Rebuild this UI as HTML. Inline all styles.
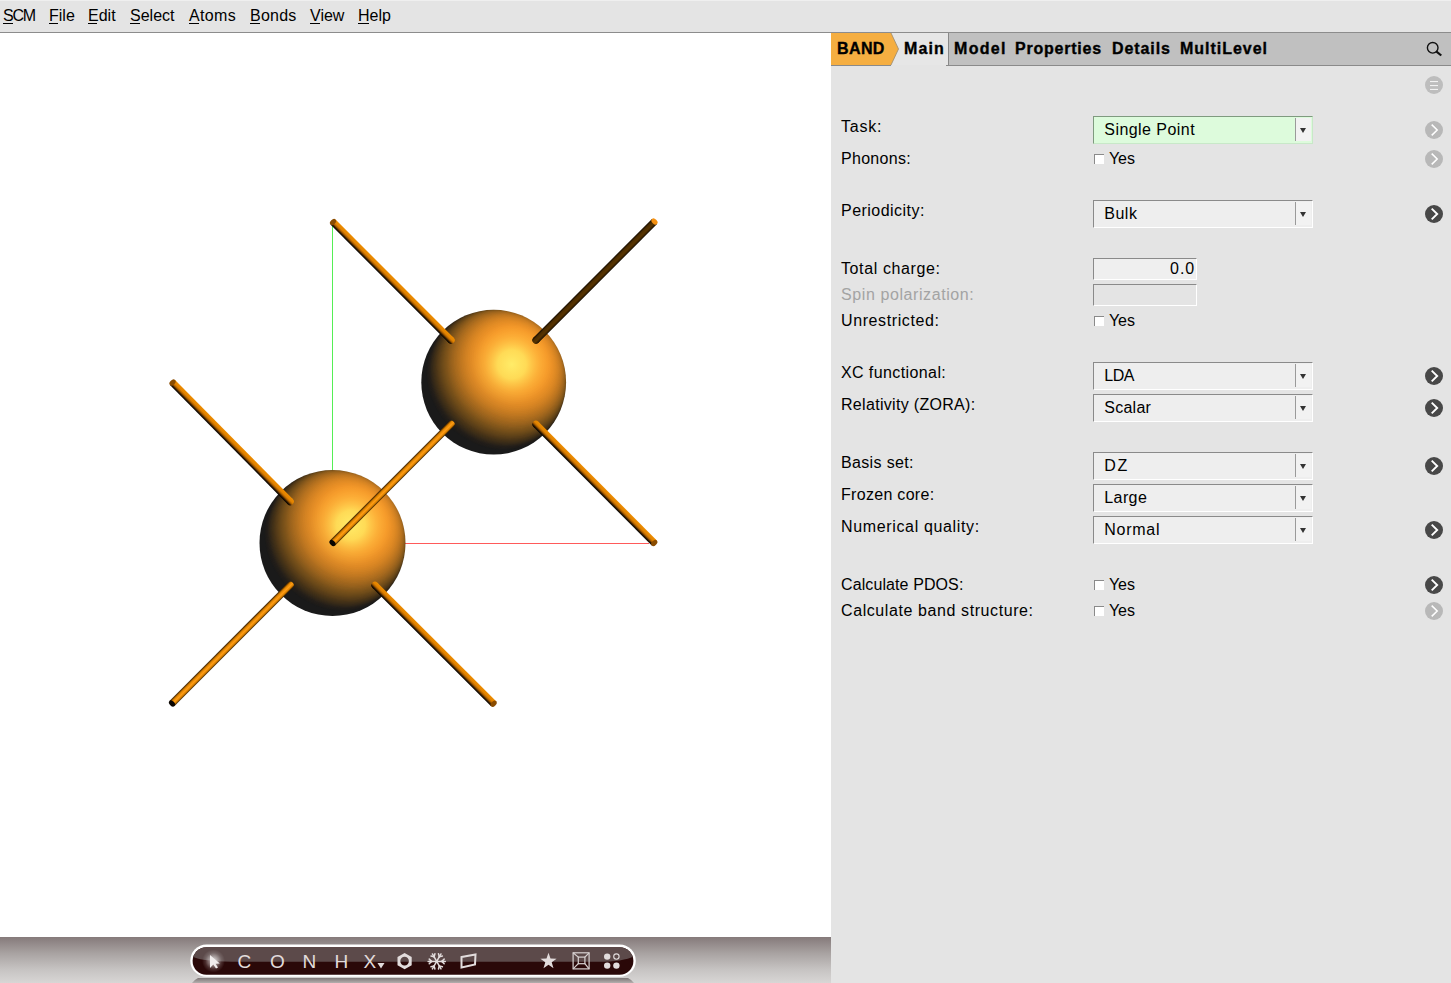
<!DOCTYPE html>
<html><head><meta charset="utf-8">
<style>
html,body{margin:0;padding:0;width:1451px;height:983px;overflow:hidden;background:#fff;}
body{position:relative;font-family:"Liberation Sans",sans-serif;font-size:16px;color:#000;}
.a{position:absolute;white-space:nowrap;line-height:18px;height:18px;}
#menubar{position:absolute;left:0;top:0;width:1451px;height:32px;background:#e4e4e4;border-bottom:1px solid #8c8c8c;}
#menubar .top{position:absolute;left:0;top:0;width:1451px;height:1px;background:#efefef;}
.u{position:absolute;height:1px;background:#000;top:23px;}
#panel{position:absolute;left:831px;top:33px;width:620px;height:950px;background:#e4e4e4;}
#tabbar{position:absolute;left:949px;top:33px;width:502px;height:32px;background:#c0c0c0;}
.b{font-weight:bold;-webkit-text-stroke:0.35px #000;}
.lbl{left:841px;}
.combo{position:absolute;left:1093px;width:218px;height:26px;background:#eeeeee;border-top:1px solid #8a8a8a;border-left:1px solid #8a8a8a;border-right:1px solid #fff;border-bottom:1px solid #fff;}
.combo .sep{position:absolute;left:201px;top:1px;width:1px;height:23px;background:#9a9a9a;}
.combo .arr{position:absolute;left:202px;top:1px;width:15px;height:23px;background:#f2f2f2;}
.combo .tri{position:absolute;left:4.3px;top:10.2px;width:0;height:0;border-left:3.7px solid transparent;border-right:3.7px solid transparent;border-top:5px solid #333;}
.chk{position:absolute;left:1094px;width:9px;height:9px;background:#fff;border-top:1px solid #8a8a8a;border-left:1px solid #8a8a8a;}
.circ{position:absolute;left:1425px;width:18px;height:18px;border-radius:50%;background:#b8b8b8;}
.circ.d{background:#484848;}
.circ svg{position:absolute;left:0;top:0;}
.tb{position:absolute;white-space:nowrap;color:#e2dcdc;font-size:19px;line-height:20px;height:20px;}
</style></head><body>
<div id="menubar"><div class="top"></div></div>
<div class="a" style="left:3px;top:7px;letter-spacing:-1.2px">SCM</div>
<div class="u" style="left:3px;width:10px"></div>
<div class="a" style="left:49px;top:7px;letter-spacing:0px">File</div>
<div class="u" style="left:49px;width:9px"></div>
<div class="a" style="left:88px;top:7px;letter-spacing:0px">Edit</div>
<div class="u" style="left:88px;width:9px"></div>
<div class="a" style="left:130px;top:7px;letter-spacing:0px">Select</div>
<div class="u" style="left:130px;width:10px"></div>
<div class="a" style="left:189px;top:7px;letter-spacing:0.35px">Atoms</div>
<div class="u" style="left:189px;width:10px"></div>
<div class="a" style="left:250px;top:7px;letter-spacing:0.25px">Bonds</div>
<div class="u" style="left:250px;width:10px"></div>
<div class="a" style="left:310px;top:7px;letter-spacing:0px">View</div>
<div class="u" style="left:310px;width:10px"></div>
<div class="a" style="left:358px;top:7px;letter-spacing:0px">Help</div>
<div class="u" style="left:358px;width:11px"></div>
<svg style="position:absolute;left:0;top:0" width="831" height="983">
<defs>
<radialGradient id="sph1" gradientUnits="userSpaceOnUse" cx="352.5" cy="524" r="100" fx="352.5" fy="524"><stop offset="0" stop-color="#ffe866"/><stop offset="0.12" stop-color="#ffd555"/><stop offset="0.28" stop-color="#fcaa3a"/><stop offset="0.45" stop-color="#e8952a"/><stop offset="0.57" stop-color="#b87520"/><stop offset="0.68" stop-color="#7a5018"/><stop offset="0.78" stop-color="#3a2a16"/><stop offset="0.86" stop-color="#1c1a18"/><stop offset="1" stop-color="#1a1a1a"/></radialGradient>
<radialGradient id="sph2" gradientUnits="userSpaceOnUse" cx="511" cy="365" r="100" fx="511" fy="365"><stop offset="0" stop-color="#ffe866"/><stop offset="0.12" stop-color="#ffd555"/><stop offset="0.28" stop-color="#fcaa3a"/><stop offset="0.45" stop-color="#e8952a"/><stop offset="0.57" stop-color="#b87520"/><stop offset="0.68" stop-color="#7a5018"/><stop offset="0.78" stop-color="#3a2a16"/><stop offset="0.86" stop-color="#1c1a18"/><stop offset="1" stop-color="#1a1a1a"/></radialGradient>
<linearGradient id="rodA" x1="0" y1="0" x2="0" y2="1"><stop offset="0" stop-color="#ee8c00"/><stop offset="0.4" stop-color="#e08200"/><stop offset="0.62" stop-color="#a85c00"/><stop offset="0.82" stop-color="#2e1800"/><stop offset="1" stop-color="#000000"/></linearGradient><linearGradient id="rodAr" x1="0" y1="0" x2="0" y2="1"><stop offset="0" stop-color="#ee8c00"/><stop offset="0.4" stop-color="#e08200"/><stop offset="0.62" stop-color="#a85c00"/><stop offset="0.82" stop-color="#2e1800"/><stop offset="1" stop-color="#000000"/></linearGradient>
<linearGradient id="rodB" x1="0" y1="0" x2="0" y2="1"><stop offset="0" stop-color="#2a1500"/><stop offset="0.28" stop-color="#e08400"/><stop offset="0.55" stop-color="#ff9c14"/><stop offset="0.8" stop-color="#d88000"/><stop offset="1" stop-color="#2a1500"/></linearGradient><linearGradient id="rodBr" x1="0" y1="0" x2="0" y2="1"><stop offset="0" stop-color="#2a1500"/><stop offset="0.28" stop-color="#e08400"/><stop offset="0.55" stop-color="#ff9c14"/><stop offset="0.8" stop-color="#d88000"/><stop offset="1" stop-color="#2a1500"/></linearGradient>
<linearGradient id="rodC" x1="0" y1="0" x2="0" y2="1"><stop offset="0" stop-color="#140a00"/><stop offset="0.28" stop-color="#4a2c00"/><stop offset="0.6" stop-color="#583400"/><stop offset="0.85" stop-color="#3a2200"/><stop offset="1" stop-color="#0a0500"/></linearGradient><linearGradient id="rodCr" x1="0" y1="0" x2="0" y2="1"><stop offset="0" stop-color="#140a00"/><stop offset="0.28" stop-color="#4a2c00"/><stop offset="0.6" stop-color="#583400"/><stop offset="0.85" stop-color="#3a2200"/><stop offset="1" stop-color="#0a0500"/></linearGradient>
</defs>
<line x1="332.5" y1="224" x2="332.5" y2="480" stroke="#55ee55" stroke-width="1"/>
<line x1="400" y1="543.5" x2="649" y2="543.5" stroke="#ff5a5a" stroke-width="1"/>
<mask id="s1c" maskUnits="userSpaceOnUse" x="257.5" y="468" width="150" height="150"><circle cx="332.5" cy="543" r="73" fill="#fff"/></mask>
<g mask="url(#s1c)">
<circle cx="332.5" cy="543" r="74" fill="#1a1a1a"/>
<ellipse cx="332.96" cy="542.54" rx="63.40" ry="72.99" transform="rotate(-45.00 332.96 542.54)" fill="#1c1b1a"/>
<polygon points="489.22,696.00 644.07,541.14 334.36,231.43 179.50,386.28" fill="#1c1b1a"/>
<ellipse cx="333.41" cy="542.09" rx="63.37" ry="72.95" transform="rotate(-45.00 333.41 542.09)" fill="#1e1c1a"/>
<polygon points="491.08,694.13 645.93,539.28 336.22,229.57 181.37,384.42" fill="#1e1c1a"/>
<ellipse cx="333.87" cy="541.63" rx="63.32" ry="72.90" transform="rotate(-45.00 333.87 541.63)" fill="#1f1d1a"/>
<polygon points="492.94,692.27 647.80,537.42 338.08,227.70 183.23,382.56" fill="#1f1d1a"/>
<ellipse cx="334.33" cy="541.17" rx="63.25" ry="72.81" transform="rotate(-45.00 334.33 541.17)" fill="#211d1a"/>
<polygon points="494.80,690.41 649.66,535.56 339.94,225.84 185.09,380.70" fill="#211d1a"/>
<ellipse cx="334.78" cy="540.72" rx="63.16" ry="72.71" transform="rotate(-45.00 334.78 540.72)" fill="#221e1a"/>
<polygon points="496.66,688.55 651.52,533.70 341.80,223.98 186.95,378.84" fill="#221e1a"/>
<ellipse cx="335.24" cy="540.26" rx="63.05" ry="72.58" transform="rotate(-45.00 335.24 540.26)" fill="#241f1a"/>
<polygon points="498.52,686.69 653.38,531.84 343.66,222.12 188.81,376.98" fill="#241f1a"/>
<ellipse cx="335.70" cy="539.80" rx="62.92" ry="72.43" transform="rotate(-45.00 335.70 539.80)" fill="#27211a"/>
<polygon points="500.38,684.83 655.24,529.97 345.53,220.26 190.67,375.12" fill="#27211a"/>
<ellipse cx="336.15" cy="539.35" rx="62.76" ry="72.25" transform="rotate(-45.00 336.15 539.35)" fill="#2b231a"/>
<polygon points="502.24,682.97 657.10,528.11 347.39,218.40 192.53,373.26" fill="#2b231a"/>
<ellipse cx="336.61" cy="538.89" rx="62.59" ry="72.05" transform="rotate(-45.00 336.61 538.89)" fill="#2f2619"/>
<polygon points="504.10,681.11 658.96,526.25 349.25,216.54 194.39,371.40" fill="#2f2619"/>
<ellipse cx="337.07" cy="538.43" rx="62.39" ry="71.83" transform="rotate(-45.00 337.07 538.43)" fill="#332819"/>
<polygon points="505.96,679.25 660.82,524.39 351.11,214.68 196.25,369.54" fill="#332819"/>
<ellipse cx="337.52" cy="537.98" rx="62.18" ry="71.58" transform="rotate(-45.00 337.52 537.98)" fill="#372a19"/>
<polygon points="507.82,677.39 662.68,522.53 352.97,212.82 198.11,367.68" fill="#372a19"/>
<ellipse cx="337.98" cy="537.52" rx="61.94" ry="71.30" transform="rotate(-45.00 337.98 537.52)" fill="#3b2d19"/>
<polygon points="509.69,675.53 664.54,520.67 354.83,210.96 199.97,365.81" fill="#3b2d19"/>
<ellipse cx="338.44" cy="537.06" rx="61.68" ry="71.01" transform="rotate(-45.00 338.44 537.06)" fill="#3f2f18"/>
<polygon points="511.55,673.67 666.40,518.81 356.69,209.10 201.83,363.95" fill="#3f2f18"/>
<ellipse cx="338.89" cy="536.61" rx="61.40" ry="70.68" transform="rotate(-45.00 338.89 536.61)" fill="#433118"/>
<polygon points="513.41,671.81 668.26,516.95 358.55,207.24 203.69,362.09" fill="#433118"/>
<ellipse cx="339.35" cy="536.15" rx="61.10" ry="70.33" transform="rotate(-45.00 339.35 536.15)" fill="#473418"/>
<polygon points="515.27,669.94 670.12,515.09 360.41,205.38 205.56,360.23" fill="#473418"/>
<ellipse cx="339.81" cy="535.69" rx="60.77" ry="69.96" transform="rotate(-45.00 339.81 535.69)" fill="#4c3618"/>
<polygon points="517.13,668.08 671.99,513.23 362.27,203.51 207.42,358.37" fill="#4c3618"/>
<ellipse cx="340.26" cy="535.24" rx="60.42" ry="69.56" transform="rotate(-45.00 340.26 535.24)" fill="#513918"/>
<polygon points="518.99,666.22 673.85,511.37 364.13,201.65 209.28,356.51" fill="#513918"/>
<ellipse cx="340.72" cy="534.78" rx="60.05" ry="69.13" transform="rotate(-45.00 340.72 534.78)" fill="#563c19"/>
<polygon points="520.85,664.36 675.71,509.51 365.99,199.79 211.14,354.65" fill="#563c19"/>
<ellipse cx="341.18" cy="534.32" rx="59.65" ry="68.67" transform="rotate(-45.00 341.18 534.32)" fill="#5a3f19"/>
<polygon points="522.71,662.50 677.57,507.65 367.85,197.93 213.00,352.79" fill="#5a3f19"/>
<ellipse cx="341.63" cy="533.87" rx="59.23" ry="68.19" transform="rotate(-45.00 341.63 533.87)" fill="#5f4219"/>
<polygon points="524.57,660.64 679.43,505.78 369.72,196.07 214.86,350.93" fill="#5f4219"/>
<ellipse cx="342.09" cy="533.41" rx="58.79" ry="67.67" transform="rotate(-45.00 342.09 533.41)" fill="#644519"/>
<polygon points="526.43,658.78 681.29,503.92 371.58,194.21 216.72,349.07" fill="#644519"/>
<ellipse cx="342.55" cy="532.95" rx="58.32" ry="67.13" transform="rotate(-45.00 342.55 532.95)" fill="#694819"/>
<polygon points="528.29,656.92 683.15,502.06 373.44,192.35 218.58,347.21" fill="#694819"/>
<ellipse cx="343.00" cy="532.50" rx="57.82" ry="66.56" transform="rotate(-45.00 343.00 532.50)" fill="#6e4b1a"/>
<polygon points="530.15,655.06 685.01,500.20 375.30,190.49 220.44,345.35" fill="#6e4b1a"/>
<ellipse cx="343.46" cy="532.04" rx="57.30" ry="65.96" transform="rotate(-45.00 343.46 532.04)" fill="#734e1a"/>
<polygon points="532.02,653.20 686.87,498.34 377.16,188.63 222.30,343.48" fill="#734e1a"/>
<ellipse cx="343.92" cy="531.58" rx="56.74" ry="65.32" transform="rotate(-45.00 343.92 531.58)" fill="#78511a"/>
<polygon points="533.88,651.34 688.73,496.48 379.02,186.77 224.16,341.62" fill="#78511a"/>
<ellipse cx="344.37" cy="531.13" rx="56.16" ry="64.66" transform="rotate(-45.00 344.37 531.13)" fill="#7d531b"/>
<polygon points="535.74,649.48 690.59,494.62 380.88,184.91 226.02,339.76" fill="#7d531b"/>
<ellipse cx="344.83" cy="530.67" rx="55.56" ry="63.95" transform="rotate(-45.00 344.83 530.67)" fill="#82561b"/>
<polygon points="537.60,647.62 692.45,492.76 382.74,183.05 227.88,337.90" fill="#82561b"/>
<ellipse cx="345.29" cy="530.21" rx="54.92" ry="63.22" transform="rotate(-45.00 345.29 530.21)" fill="#86591c"/>
<ellipse cx="345.74" cy="529.76" rx="54.25" ry="62.45" transform="rotate(-45.00 345.74 529.76)" fill="#8c5b1c"/>
<ellipse cx="346.20" cy="529.30" rx="53.55" ry="61.64" transform="rotate(-45.00 346.20 529.30)" fill="#905e1d"/>
<ellipse cx="346.65" cy="528.85" rx="52.81" ry="60.79" transform="rotate(-45.00 346.65 528.85)" fill="#96601d"/>
<ellipse cx="347.11" cy="528.39" rx="52.04" ry="59.91" transform="rotate(-45.00 347.11 528.39)" fill="#9a631d"/>
<ellipse cx="347.57" cy="527.93" rx="51.23" ry="58.98" transform="rotate(-45.00 347.57 527.93)" fill="#a0661e"/>
<ellipse cx="348.02" cy="527.48" rx="50.39" ry="58.01" transform="rotate(-45.00 348.02 527.48)" fill="#a4681e"/>
<ellipse cx="348.48" cy="527.02" rx="49.50" ry="56.99" transform="rotate(-45.00 348.48 527.02)" fill="#aa6b1e"/>
<ellipse cx="348.94" cy="526.56" rx="48.57" ry="55.92" transform="rotate(-45.00 348.94 526.56)" fill="#ae6e1f"/>
<ellipse cx="349.39" cy="526.11" rx="47.60" ry="54.80" transform="rotate(-45.00 349.39 526.11)" fill="#b4701f"/>
<ellipse cx="349.85" cy="525.65" rx="46.58" ry="53.62" transform="rotate(-45.00 349.85 525.65)" fill="#b8731f"/>
<ellipse cx="350.31" cy="525.19" rx="45.51" ry="52.39" transform="rotate(-45.00 350.31 525.19)" fill="#bd751f"/>
<ellipse cx="350.76" cy="524.74" rx="44.38" ry="51.09" transform="rotate(-45.00 350.76 524.74)" fill="#c27820"/>
<ellipse cx="351.22" cy="524.28" rx="43.19" ry="49.72" transform="rotate(-45.00 351.22 524.28)" fill="#c77b20"/>
<ellipse cx="351.68" cy="523.82" rx="41.94" ry="48.28" transform="rotate(-45.00 351.68 523.82)" fill="#cc7d20"/>
<ellipse cx="352.13" cy="523.37" rx="40.62" ry="46.77" transform="rotate(-45.00 352.13 523.37)" fill="#d18020"/>
<ellipse cx="352.59" cy="522.91" rx="39.23" ry="45.16" transform="rotate(-45.00 352.59 522.91)" fill="#d68321"/>
<ellipse cx="353.05" cy="522.45" rx="37.74" ry="43.45" transform="rotate(-45.00 353.05 522.45)" fill="#db8621"/>
<ellipse cx="353.50" cy="522.00" rx="36.17" ry="41.63" transform="rotate(-45.00 353.50 522.00)" fill="#e08821"/>
<ellipse cx="353.96" cy="521.54" rx="34.48" ry="39.69" transform="rotate(-45.00 353.96 521.54)" fill="#e58b22"/>
<ellipse cx="354.42" cy="521.08" rx="32.66" ry="37.60" transform="rotate(-45.00 354.42 521.08)" fill="#ea8e22"/>
<ellipse cx="354.87" cy="520.63" rx="30.70" ry="35.34" transform="rotate(-45.00 354.87 520.63)" fill="#ef9022"/>
<ellipse cx="355.33" cy="520.17" rx="28.56" ry="32.87" transform="rotate(-45.00 355.33 520.17)" fill="#f19323"/>
<ellipse cx="355.79" cy="519.71" rx="26.19" ry="30.15" transform="rotate(-45.00 355.79 519.71)" fill="#f49524"/>
<ellipse cx="356.24" cy="519.26" rx="23.54" ry="27.09" transform="rotate(-45.00 356.24 519.26)" fill="#f69725"/>
<ellipse cx="356.70" cy="518.80" rx="20.48" ry="23.57" transform="rotate(-45.00 356.70 518.80)" fill="#f99926"/>
<ellipse cx="357.16" cy="518.34" rx="16.80" ry="19.34" transform="rotate(-45.00 357.16 518.34)" fill="#fb9b27"/>
<ellipse cx="357.61" cy="517.89" rx="11.93" ry="13.73" transform="rotate(-45.00 357.61 517.89)" fill="#fe9d28"/>
<radialGradient id="s1s" gradientUnits="userSpaceOnUse" cx="350.75" cy="525.12" r="65.70"><stop offset="0" stop-color="#ffec68" stop-opacity="1"/><stop offset="0.22" stop-color="#ffe05a" stop-opacity="0.92"/><stop offset="0.42" stop-color="#ffbc42" stop-opacity="0.62"/><stop offset="0.62" stop-color="#ffa232" stop-opacity="0.32"/><stop offset="0.82" stop-color="#ff9a28" stop-opacity="0.1"/><stop offset="1" stop-color="#ff9a20" stop-opacity="0"/></radialGradient>
<circle cx="350.75" cy="525.12" r="65.70" fill="url(#s1s)"/>
</g>
<mask id="s2c" maskUnits="userSpaceOnUse" x="419.29999999999995" y="307.79999999999995" width="148.8" height="148.8"><circle cx="493.7" cy="382.2" r="72.4" fill="#fff"/></mask>
<g mask="url(#s2c)">
<circle cx="493.7" cy="382.2" r="73.4" fill="#1a1a1a"/>
<ellipse cx="494.15" cy="381.75" rx="62.88" ry="72.39" transform="rotate(-45.00 494.15 381.75)" fill="#1c1b1a"/>
<polygon points="649.13,533.94 802.71,380.35 495.55,73.19 341.96,226.77" fill="#1c1b1a"/>
<ellipse cx="494.61" cy="381.29" rx="62.85" ry="72.35" transform="rotate(-45.00 494.61 381.29)" fill="#1e1c1a"/>
<polygon points="650.97,532.09 804.56,378.51 497.39,71.34 343.81,224.93" fill="#1e1c1a"/>
<ellipse cx="495.06" cy="380.84" rx="62.80" ry="72.30" transform="rotate(-45.00 495.06 380.84)" fill="#1f1d1a"/>
<polygon points="652.82,530.25 806.40,376.66 499.24,69.50 345.65,223.08" fill="#1f1d1a"/>
<ellipse cx="495.51" cy="380.39" rx="62.73" ry="72.22" transform="rotate(-45.00 495.51 380.39)" fill="#211d1a"/>
<polygon points="654.67,528.40 808.25,374.82 501.08,67.65 347.50,221.23" fill="#211d1a"/>
<ellipse cx="495.96" cy="379.94" rx="62.64" ry="72.11" transform="rotate(-45.00 495.96 379.94)" fill="#221e1a"/>
<polygon points="656.51,526.56 810.09,372.97 502.93,65.81 349.34,219.39" fill="#221e1a"/>
<ellipse cx="496.42" cy="379.48" rx="62.53" ry="71.98" transform="rotate(-45.00 496.42 379.48)" fill="#241f1a"/>
<polygon points="658.36,524.71 811.94,371.13 504.77,63.96 351.19,217.54" fill="#241f1a"/>
<ellipse cx="496.87" cy="379.03" rx="62.40" ry="71.83" transform="rotate(-45.00 496.87 379.03)" fill="#27211a"/>
<polygon points="660.20,522.87 813.79,369.28 506.62,62.11 353.03,215.70" fill="#27211a"/>
<ellipse cx="497.32" cy="378.58" rx="62.25" ry="71.66" transform="rotate(-45.00 497.32 378.58)" fill="#2b231a"/>
<polygon points="662.05,521.02 815.63,367.44 508.46,60.27 354.88,213.85" fill="#2b231a"/>
<ellipse cx="497.78" cy="378.12" rx="62.08" ry="71.46" transform="rotate(-45.00 497.78 378.12)" fill="#2f2619"/>
<polygon points="663.89,519.17 817.48,365.59 510.31,58.42 356.73,212.01" fill="#2f2619"/>
<ellipse cx="498.23" cy="377.67" rx="61.88" ry="71.24" transform="rotate(-45.00 498.23 377.67)" fill="#332819"/>
<polygon points="665.74,517.33 819.32,363.75 512.15,56.58 358.57,210.16" fill="#332819"/>
<ellipse cx="498.68" cy="377.22" rx="61.67" ry="70.99" transform="rotate(-45.00 498.68 377.22)" fill="#372a19"/>
<polygon points="667.58,515.48 821.17,361.90 514.00,54.73 360.42,208.32" fill="#372a19"/>
<ellipse cx="499.13" cy="376.77" rx="61.43" ry="70.72" transform="rotate(-45.00 499.13 376.77)" fill="#3b2d19"/>
<polygon points="669.43,513.64 823.01,360.05 515.85,52.89 362.26,206.47" fill="#3b2d19"/>
<ellipse cx="499.59" cy="376.31" rx="61.17" ry="70.42" transform="rotate(-45.00 499.59 376.31)" fill="#3f2f18"/>
<polygon points="671.27,511.79 824.86,358.21 517.69,51.04 364.11,204.63" fill="#3f2f18"/>
<ellipse cx="500.04" cy="375.86" rx="60.90" ry="70.10" transform="rotate(-45.00 500.04 375.86)" fill="#433118"/>
<polygon points="673.12,509.95 826.70,356.36 519.54,49.20 365.95,202.78" fill="#433118"/>
<ellipse cx="500.49" cy="375.41" rx="60.59" ry="69.75" transform="rotate(-45.00 500.49 375.41)" fill="#473418"/>
<polygon points="674.97,508.10 828.55,354.52 521.38,47.35 367.80,200.93" fill="#473418"/>
<ellipse cx="500.95" cy="374.95" rx="60.27" ry="69.38" transform="rotate(-45.00 500.95 374.95)" fill="#4c3618"/>
<polygon points="676.81,506.26 830.39,352.67 523.23,45.51 369.64,199.09" fill="#4c3618"/>
<ellipse cx="501.40" cy="374.50" rx="59.92" ry="68.98" transform="rotate(-45.00 501.40 374.50)" fill="#513918"/>
<polygon points="678.66,504.41 832.24,350.83 525.07,43.66 371.49,197.24" fill="#513918"/>
<ellipse cx="501.85" cy="374.05" rx="59.56" ry="68.56" transform="rotate(-45.00 501.85 374.05)" fill="#563c19"/>
<polygon points="680.50,502.56 834.09,348.98 526.92,41.81 373.34,195.40" fill="#563c19"/>
<ellipse cx="502.30" cy="373.60" rx="59.16" ry="68.11" transform="rotate(-45.00 502.30 373.60)" fill="#5a3f19"/>
<polygon points="682.35,500.72 835.93,347.14 528.76,39.97 375.18,193.55" fill="#5a3f19"/>
<ellipse cx="502.76" cy="373.14" rx="58.74" ry="67.63" transform="rotate(-45.00 502.76 373.14)" fill="#5f4219"/>
<polygon points="684.19,498.87 837.78,345.29 530.61,38.12 377.03,191.71" fill="#5f4219"/>
<ellipse cx="503.21" cy="372.69" rx="58.30" ry="67.12" transform="rotate(-45.00 503.21 372.69)" fill="#644519"/>
<polygon points="686.04,497.03 839.62,343.44 532.46,36.28 378.87,189.86" fill="#644519"/>
<ellipse cx="503.66" cy="372.24" rx="57.84" ry="66.58" transform="rotate(-45.00 503.66 372.24)" fill="#694819"/>
<polygon points="687.88,495.18 841.47,341.60 534.30,34.43 380.72,188.02" fill="#694819"/>
<ellipse cx="504.12" cy="371.78" rx="57.34" ry="66.01" transform="rotate(-45.00 504.12 371.78)" fill="#6e4b1a"/>
<polygon points="689.73,493.34 843.31,339.75 536.15,32.59 382.56,186.17" fill="#6e4b1a"/>
<ellipse cx="504.57" cy="371.33" rx="56.82" ry="65.41" transform="rotate(-45.00 504.57 371.33)" fill="#734e1a"/>
<polygon points="691.58,491.49 845.16,337.91 537.99,30.74 384.41,184.32" fill="#734e1a"/>
<ellipse cx="505.02" cy="370.88" rx="56.28" ry="64.78" transform="rotate(-45.00 505.02 370.88)" fill="#78511a"/>
<polygon points="693.42,489.65 847.00,336.06 539.84,28.90 386.25,182.48" fill="#78511a"/>
<ellipse cx="505.47" cy="370.43" rx="55.70" ry="64.12" transform="rotate(-45.00 505.47 370.43)" fill="#7d531b"/>
<polygon points="695.27,487.80 848.85,334.22 541.68,27.05 388.10,180.63" fill="#7d531b"/>
<ellipse cx="505.93" cy="369.97" rx="55.10" ry="63.43" transform="rotate(-45.00 505.93 369.97)" fill="#82561b"/>
<polygon points="697.11,485.96 850.70,332.37 543.53,25.20 389.94,178.79" fill="#82561b"/>
<ellipse cx="506.38" cy="369.52" rx="54.47" ry="62.70" transform="rotate(-45.00 506.38 369.52)" fill="#86591c"/>
<ellipse cx="506.83" cy="369.07" rx="53.80" ry="61.94" transform="rotate(-45.00 506.83 369.07)" fill="#8c5b1c"/>
<ellipse cx="507.29" cy="368.61" rx="53.11" ry="61.13" transform="rotate(-45.00 507.29 368.61)" fill="#905e1d"/>
<ellipse cx="507.74" cy="368.16" rx="52.38" ry="60.29" transform="rotate(-45.00 507.74 368.16)" fill="#96601d"/>
<ellipse cx="508.19" cy="367.71" rx="51.61" ry="59.42" transform="rotate(-45.00 508.19 367.71)" fill="#9a631d"/>
<ellipse cx="508.64" cy="367.26" rx="50.81" ry="58.49" transform="rotate(-45.00 508.64 367.26)" fill="#a0661e"/>
<ellipse cx="509.10" cy="366.80" rx="49.97" ry="57.53" transform="rotate(-45.00 509.10 366.80)" fill="#a4681e"/>
<ellipse cx="509.55" cy="366.35" rx="49.10" ry="56.52" transform="rotate(-45.00 509.55 366.35)" fill="#aa6b1e"/>
<ellipse cx="510.00" cy="365.90" rx="48.17" ry="55.46" transform="rotate(-45.00 510.00 365.90)" fill="#ae6e1f"/>
<ellipse cx="510.46" cy="365.44" rx="47.21" ry="54.35" transform="rotate(-45.00 510.46 365.44)" fill="#b4701f"/>
<ellipse cx="510.91" cy="364.99" rx="46.20" ry="53.18" transform="rotate(-45.00 510.91 364.99)" fill="#b8731f"/>
<ellipse cx="511.36" cy="364.54" rx="45.13" ry="51.96" transform="rotate(-45.00 511.36 364.54)" fill="#bd751f"/>
<ellipse cx="511.81" cy="364.09" rx="44.02" ry="50.67" transform="rotate(-45.00 511.81 364.09)" fill="#c27820"/>
<ellipse cx="512.27" cy="363.63" rx="42.84" ry="49.32" transform="rotate(-45.00 512.27 363.63)" fill="#c77b20"/>
<ellipse cx="512.72" cy="363.18" rx="41.60" ry="47.89" transform="rotate(-45.00 512.72 363.18)" fill="#cc7d20"/>
<ellipse cx="513.17" cy="362.73" rx="40.29" ry="46.38" transform="rotate(-45.00 513.17 362.73)" fill="#d18020"/>
<ellipse cx="513.63" cy="362.27" rx="38.90" ry="44.79" transform="rotate(-45.00 513.63 362.27)" fill="#d68321"/>
<ellipse cx="514.08" cy="361.82" rx="37.43" ry="43.09" transform="rotate(-45.00 514.08 361.82)" fill="#db8621"/>
<ellipse cx="514.53" cy="361.37" rx="35.87" ry="41.29" transform="rotate(-45.00 514.53 361.37)" fill="#e08821"/>
<ellipse cx="514.98" cy="360.92" rx="34.19" ry="39.36" transform="rotate(-45.00 514.98 360.92)" fill="#e58b22"/>
<ellipse cx="515.44" cy="360.46" rx="32.39" ry="37.29" transform="rotate(-45.00 515.44 360.46)" fill="#ea8e22"/>
<ellipse cx="515.89" cy="360.01" rx="30.45" ry="35.05" transform="rotate(-45.00 515.89 360.01)" fill="#ef9022"/>
<ellipse cx="516.34" cy="359.56" rx="28.32" ry="32.60" transform="rotate(-45.00 516.34 359.56)" fill="#f19323"/>
<ellipse cx="516.80" cy="359.10" rx="25.98" ry="29.90" transform="rotate(-45.00 516.80 359.10)" fill="#f49524"/>
<ellipse cx="517.25" cy="358.65" rx="23.34" ry="26.87" transform="rotate(-45.00 517.25 358.65)" fill="#f69725"/>
<ellipse cx="517.70" cy="358.20" rx="20.31" ry="23.38" transform="rotate(-45.00 517.70 358.20)" fill="#f99926"/>
<ellipse cx="518.15" cy="357.75" rx="16.66" ry="19.18" transform="rotate(-45.00 518.15 357.75)" fill="#fb9b27"/>
<ellipse cx="518.61" cy="357.29" rx="11.83" ry="13.62" transform="rotate(-45.00 518.61 357.29)" fill="#fe9d28"/>
<radialGradient id="s2s" gradientUnits="userSpaceOnUse" cx="511.80" cy="364.46" r="65.16"><stop offset="0" stop-color="#ffec68" stop-opacity="1"/><stop offset="0.22" stop-color="#ffe05a" stop-opacity="0.92"/><stop offset="0.42" stop-color="#ffbc42" stop-opacity="0.62"/><stop offset="0.62" stop-color="#ffa232" stop-opacity="0.32"/><stop offset="0.82" stop-color="#ff9a28" stop-opacity="0.1"/><stop offset="1" stop-color="#ff9a20" stop-opacity="0"/></radialGradient>
<circle cx="511.80" cy="364.46" r="65.16" fill="url(#s2s)"/>
</g>
<g transform="translate(172.5,382.5) rotate(45.339)"><circle cx="167.45" cy="0" r="3.6" fill="url(#rodAr)"/><rect x="0" y="-3.6" width="167.45" height="7.2" fill="url(#rodA)"/><ellipse cx="0" cy="0" rx="2.4" ry="3.6" fill="#8a4c00"/></g>
<g transform="translate(333,222) rotate(45.048)"><circle cx="167.16" cy="0" r="3.6" fill="url(#rodAr)"/><rect x="0" y="-3.6" width="167.16" height="7.2" fill="url(#rodA)"/><ellipse cx="0" cy="0" rx="2.4" ry="3.6" fill="#8a4c00"/></g>
<g transform="translate(374.9,585.2) rotate(44.976)"><circle cx="0" cy="0" r="3.6" fill="url(#rodAr)"/><rect x="0" y="-3.6" width="167.80" height="7.2" fill="url(#rodA)"/><ellipse cx="167.80" cy="0" rx="2.4" ry="3.6" fill="#8a4c00"/></g>
<g transform="translate(535.9,424.2) rotate(45.097)"><circle cx="0" cy="0" r="3.6" fill="url(#rodAr)"/><rect x="0" y="-3.6" width="167.73" height="7.2" fill="url(#rodA)"/><ellipse cx="167.73" cy="0" rx="2.4" ry="3.6" fill="#8a4c00"/></g>
<g transform="translate(172,703.5) rotate(-45.024)"><circle cx="167.23" cy="0" r="3.6" fill="url(#rodBr)"/><rect x="0" y="-3.6" width="167.23" height="7.2" fill="url(#rodB)"/><ellipse cx="0" cy="0" rx="2.4" ry="3.6" fill="#0a0500"/></g>
<g transform="translate(332.5,543) rotate(-45.048)"><circle cx="167.87" cy="0" r="3.6" fill="url(#rodBr)"/><rect x="0" y="-3.6" width="167.87" height="7.2" fill="url(#rodB)"/><ellipse cx="0" cy="0" rx="2.4" ry="3.6" fill="#0a0500"/></g>
<g transform="translate(535.9,340.3) rotate(-45.048)"><circle cx="0" cy="0" r="3.6" fill="url(#rodCr)"/><rect x="0" y="-3.6" width="167.87" height="7.2" fill="url(#rodC)"/><ellipse cx="167.87" cy="0" rx="2.4" ry="3.6" fill="#f59010"/></g>
</svg>
<svg style="position:absolute;left:0;top:937px" width="831" height="46">
<defs>
<linearGradient id="tbbg" x1="0" y1="0" x2="0" y2="1"><stop offset="0" stop-color="#857a7a"/><stop offset="0.35" stop-color="#a8a2a1"/><stop offset="0.7" stop-color="#c6c3c2"/><stop offset="1" stop-color="#d8d6d5"/></linearGradient>
<radialGradient id="glow" cx="0.5" cy="0.5" r="0.5"><stop offset="0" stop-color="#fff" stop-opacity="0.85"/><stop offset="0.35" stop-color="#fff" stop-opacity="0.5"/><stop offset="0.7" stop-color="#fff" stop-opacity="0.15"/><stop offset="1" stop-color="#fff" stop-opacity="0"/></radialGradient>
<clipPath id="pillclip"><rect x="192.6" y="10.2" width="440.8" height="27.6" rx="13.8" ry="13.8"/></clipPath>
</defs>
<rect x="0" y="0" width="831" height="46" fill="url(#tbbg)"/>
<linearGradient id="refl" x1="0" y1="0" x2="0" y2="1"><stop offset="0" stop-color="#7e7676"/><stop offset="1" stop-color="#b4afae"/></linearGradient><path d="M198,41 L628,41 Q632,43 634,46 L192,46 Q194,43 198,41 Z" fill="url(#refl)"/>
<rect x="190.3" y="7.6" width="445.5" height="32.2" rx="16.1" ry="16.1" fill="#fff"/>
<g clip-path="url(#pillclip)">
<rect x="190" y="8" width="450" height="34" fill="#2a0808"/>
<path d="M192,19 Q198,24 232,24.8 L598,24.8 Q626,24.6 636,18 L636,8 L192,8 Z" fill="#5c4a4a"/>
<circle cx="213.5" cy="24" r="11.5" fill="url(#glow)"/>
</g>
<path d="M210,18 L210,31 L213.3,27.5 L216,31.5 L218,30.5 L215.5,26.7 L219.8,26.5 Z" fill="#f0ecec"/>
<path d="M377.5,26 L384.5,26 L381,31.5 Z" fill="#e2dcdc"/>
<path fill-rule="evenodd" fill="#e2dcdc" d="M404.60,15.90 L397.50,20.00 L397.50,28.20 L404.60,32.30 L411.70,28.20 L411.70,20.00 Z M408.90,24.1 A4.3,4.3 0 1,0 400.30,24.1 A4.3,4.3 0 1,0 408.90,24.1 Z"/>
<g stroke="#e2dcdc" stroke-width="1.5" fill="none" stroke-linecap="round"><line x1="436.7" y1="24.4" x2="445.30" y2="24.40"/><line x1="441.90" y1="24.40" x2="444.16" y2="26.66"/><line x1="441.90" y1="24.40" x2="444.16" y2="22.14"/><line x1="436.7" y1="24.4" x2="441.00" y2="31.85"/><line x1="439.30" y1="28.90" x2="438.47" y2="31.99"/><line x1="439.30" y1="28.90" x2="442.39" y2="29.73"/><line x1="436.7" y1="24.4" x2="432.40" y2="31.85"/><line x1="434.10" y1="28.90" x2="431.01" y2="29.73"/><line x1="434.10" y1="28.90" x2="434.93" y2="31.99"/><line x1="436.7" y1="24.4" x2="428.10" y2="24.40"/><line x1="431.50" y1="24.40" x2="429.24" y2="22.14"/><line x1="431.50" y1="24.40" x2="429.24" y2="26.66"/><line x1="436.7" y1="24.4" x2="432.40" y2="16.95"/><line x1="434.10" y1="19.90" x2="434.93" y2="16.81"/><line x1="434.10" y1="19.90" x2="431.01" y2="19.07"/><line x1="436.7" y1="24.4" x2="441.00" y2="16.95"/><line x1="439.30" y1="19.90" x2="442.39" y2="19.07"/><line x1="439.30" y1="19.90" x2="438.47" y2="16.81"/></g>
<polygon points="461.5,20 475.5,17.5 475,27.5 461.5,30.5" fill="none" stroke="#e2dcdc" stroke-width="2"/>
<polygon points="548.50,15.80 550.50,21.55 556.58,21.67 551.73,25.35 553.50,31.18 548.50,27.70 543.50,31.18 545.27,25.35 540.42,21.67 546.50,21.55" fill="#e2dcdc"/>
<g fill="none" stroke="#d8d2d2" stroke-width="1.2"><rect x="573.1" y="15.8" width="16" height="16.1"/><rect x="578.3" y="20.1" width="6.6" height="6.6"/><line x1="573.1" y1="15.8" x2="578.3" y2="20.1"/><line x1="589.1" y1="15.8" x2="584.9" y2="20.1"/><line x1="573.1" y1="31.9" x2="578.3" y2="26.7"/><line x1="589.1" y1="31.9" x2="584.9" y2="26.7"/></g>
<circle cx="607.2" cy="19.6" r="3.2" fill="#e2dcdc"/><circle cx="616.4" cy="19.6" r="2.7" fill="none" stroke="#e2dcdc" stroke-width="1.1"/>
<circle cx="607.2" cy="28.6" r="3.2" fill="#e2dcdc"/><circle cx="616.4" cy="28.6" r="3.2" fill="#e2dcdc"/>
</svg>
<div class="tb" style="left:237.5px;top:952px">C</div>
<div class="tb" style="left:270px;top:952px">O</div>
<div class="tb" style="left:302.5px;top:952px">N</div>
<div class="tb" style="left:334.5px;top:952px">H</div>
<div class="tb" style="left:363.5px;top:952px">X</div>
<div id="panel"></div>
<div id="tabbar"></div>
<svg style="position:absolute;left:0;top:0" width="1451" height="70">
<rect x="885" y="33" width="63" height="32" fill="#e6e6e6"/>
<polygon points="831,33 891,33 898.5,49 891,65 831,65" fill="#f5ae41"/>
<polyline points="891,33 898.5,49 891,65" fill="none" stroke="#9a8a70" stroke-width="0.8"/>
<rect x="831" y="65" width="60" height="1" fill="#8a8a8a"/>
<rect x="948" y="33" width="1" height="32" fill="#888"/>
<rect x="946" y="65" width="505" height="1" fill="#8a8a8a"/>
<circle cx="1432.7" cy="47.8" r="5.3" fill="none" stroke="#111" stroke-width="1.4"/>
<line x1="1436.5" y1="51.6" x2="1441.3" y2="55.5" stroke="#111" stroke-width="2.2"/>
</svg>
<div class="a b" style="left:837px;top:40px;letter-spacing:0.4px">BAND</div>
<div class="a b" style="left:904px;top:40px;letter-spacing:1.1px">Main</div>
<div class="a b" style="left:954px;top:40px;letter-spacing:1.32px">Model</div>
<div class="a b" style="left:1015px;top:40px;letter-spacing:0.77px">Properties</div>
<div class="a b" style="left:1112px;top:40px;letter-spacing:0.92px">Details</div>
<div class="a b" style="left:1180px;top:40px;letter-spacing:0.97px">MultiLevel</div>
<div class="a lbl" style="top:118px;letter-spacing:0.8px">Task:</div>
<div class="a lbl" style="top:150px;letter-spacing:0.3px">Phonons:</div>
<div class="a lbl" style="top:202px;letter-spacing:0.47px">Periodicity:</div>
<div class="a lbl" style="top:260px;letter-spacing:0.61px">Total charge:</div>
<div class="a lbl" style="top:286px;letter-spacing:0.59px;color:#a3a3a3">Spin polarization:</div>
<div class="a lbl" style="top:312px;letter-spacing:0.6px">Unrestricted:</div>
<div class="a lbl" style="top:364px;letter-spacing:0.4px">XC functional:</div>
<div class="a lbl" style="top:396px;letter-spacing:0.31px">Relativity (ZORA):</div>
<div class="a lbl" style="top:454px;letter-spacing:0.35px">Basis set:</div>
<div class="a lbl" style="top:486px;letter-spacing:0.3px">Frozen core:</div>
<div class="a lbl" style="top:518px;letter-spacing:0.65px">Numerical quality:</div>
<div class="a lbl" style="top:576px;letter-spacing:0.1px">Calculate PDOS:</div>
<div class="a lbl" style="top:602px;letter-spacing:0.59px">Calculate band structure:</div>
<div class="combo" style="top:116px;background:#ddfbdc;border-top-color:#7f9a7f;border-left-color:#7f9a7f;border-right-color:#c8e8c8;border-bottom-color:#c8e8c8;"><div class="sep"></div><div class="arr"><div class="tri"></div></div></div>
<div class="a" style="left:1104.3px;top:121px;letter-spacing:0.45px">Single Point</div>
<div class="combo" style="top:200px;"><div class="sep"></div><div class="arr"><div class="tri"></div></div></div>
<div class="a" style="left:1104.3px;top:205px;letter-spacing:0.5px">Bulk</div>
<div class="combo" style="top:362px;"><div class="sep"></div><div class="arr"><div class="tri"></div></div></div>
<div class="a" style="left:1104.3px;top:367px;letter-spacing:-0.5px">LDA</div>
<div class="combo" style="top:394px;"><div class="sep"></div><div class="arr"><div class="tri"></div></div></div>
<div class="a" style="left:1104.3px;top:399px;letter-spacing:0.25px">Scalar</div>
<div class="combo" style="top:452px;"><div class="sep"></div><div class="arr"><div class="tri"></div></div></div>
<div class="a" style="left:1104.3px;top:457px;letter-spacing:1.6px">DZ</div>
<div class="combo" style="top:484px;"><div class="sep"></div><div class="arr"><div class="tri"></div></div></div>
<div class="a" style="left:1104.3px;top:489px;letter-spacing:0.4px">Large</div>
<div class="combo" style="top:516px;"><div class="sep"></div><div class="arr"><div class="tri"></div></div></div>
<div class="a" style="left:1104.3px;top:521px;letter-spacing:0.72px">Normal</div>
<div class="chk" style="top:154px"></div>
<div class="a" style="left:1109px;top:150px;letter-spacing:-0.1px">Yes</div>
<div class="chk" style="top:316px"></div>
<div class="a" style="left:1109px;top:312px;letter-spacing:-0.1px">Yes</div>
<div class="chk" style="top:580px"></div>
<div class="a" style="left:1109px;top:576px;letter-spacing:-0.1px">Yes</div>
<div class="chk" style="top:606px"></div>
<div class="a" style="left:1109px;top:602px;letter-spacing:-0.1px">Yes</div>
<div style="position:absolute;left:1093px;top:258px;width:102px;height:20px;background:#efefef;border-top:1px solid #8a8a8a;border-left:1px solid #8a8a8a;border-right:1px solid #fff;border-bottom:1px solid #fff"></div>
<div class="a" style="left:1170px;top:260px;letter-spacing:1.0px">0.0</div>
<div style="position:absolute;left:1093px;top:284px;width:102px;height:20px;background:#e4e4e4;border-top:1px solid #8a8a8a;border-left:1px solid #8a8a8a;border-right:1px solid #fff;border-bottom:1px solid #fff"></div>
<div class="circ" style="top:76px;background:#bdbdbd"><svg width="18" height="18"><rect x="5" y="5" width="8" height="1.1" fill="#f2f2f2"/><rect x="5" y="9" width="8" height="1.1" fill="#f2f2f2"/><rect x="5" y="12.9" width="8" height="1.1" fill="#f2f2f2"/></svg></div>
<div class="circ" style="top:121px"><svg width="18" height="18"><polyline points="6.7,3.6 12.2,9 6.7,14.4" fill="none" stroke="#fff" stroke-width="1.5"/></svg></div>
<div class="circ" style="top:150px"><svg width="18" height="18"><polyline points="6.7,3.6 12.2,9 6.7,14.4" fill="none" stroke="#fff" stroke-width="1.5"/></svg></div>
<div class="circ d" style="top:205px"><svg width="18" height="18"><polyline points="6.7,3.6 12.2,9 6.7,14.4" fill="none" stroke="#fff" stroke-width="1.9"/></svg></div>
<div class="circ d" style="top:367px"><svg width="18" height="18"><polyline points="6.7,3.6 12.2,9 6.7,14.4" fill="none" stroke="#fff" stroke-width="1.9"/></svg></div>
<div class="circ d" style="top:399px"><svg width="18" height="18"><polyline points="6.7,3.6 12.2,9 6.7,14.4" fill="none" stroke="#fff" stroke-width="1.9"/></svg></div>
<div class="circ d" style="top:457px"><svg width="18" height="18"><polyline points="6.7,3.6 12.2,9 6.7,14.4" fill="none" stroke="#fff" stroke-width="1.9"/></svg></div>
<div class="circ d" style="top:521px"><svg width="18" height="18"><polyline points="6.7,3.6 12.2,9 6.7,14.4" fill="none" stroke="#fff" stroke-width="1.9"/></svg></div>
<div class="circ d" style="top:576px"><svg width="18" height="18"><polyline points="6.7,3.6 12.2,9 6.7,14.4" fill="none" stroke="#fff" stroke-width="1.9"/></svg></div>
<div class="circ" style="top:602px"><svg width="18" height="18"><polyline points="6.7,3.6 12.2,9 6.7,14.4" fill="none" stroke="#fff" stroke-width="1.5"/></svg></div>
</body></html>
